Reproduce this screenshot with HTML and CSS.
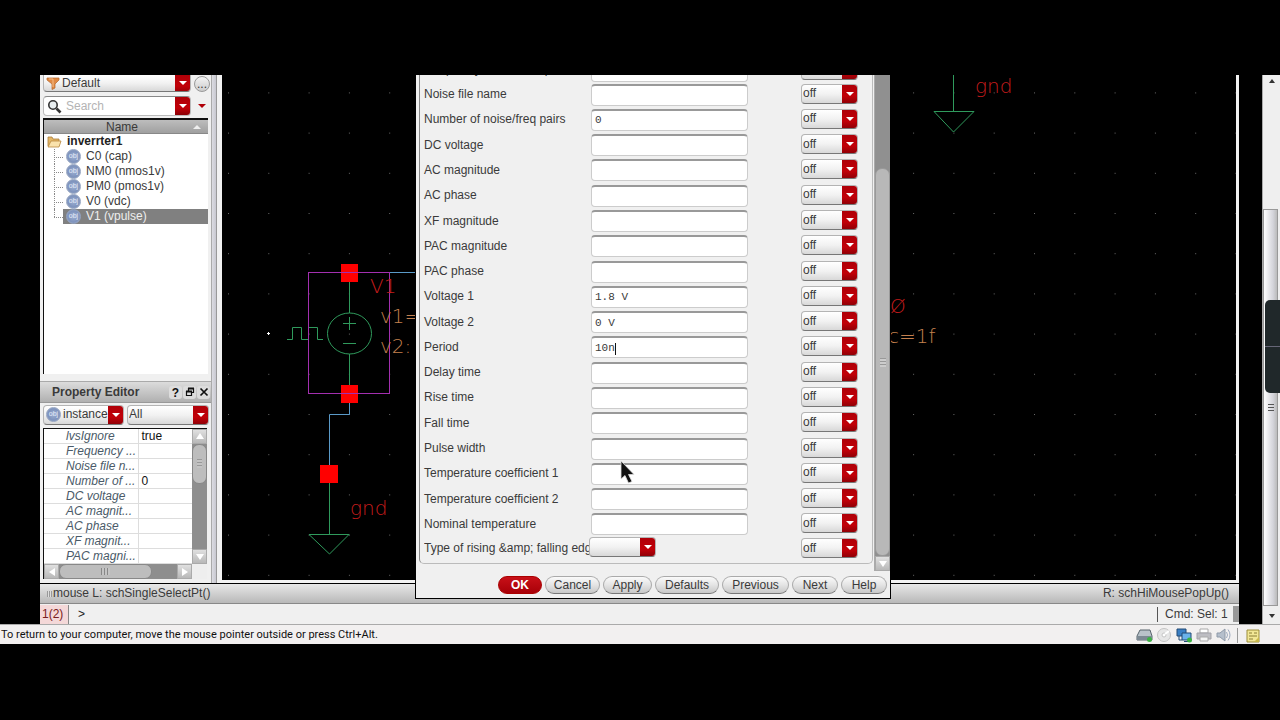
FILE: index.html
```html
<!DOCTYPE html>
<html lang="en">
<head>
<meta charset="utf-8">
<title>Schematic Editor - Edit Object Properties</title>
<link rel="stylesheet" href="styles.css">
</head>
<body>
<div class="stage">
  <div class="desk">
    <div class="app">
      <div class="workspace">
        <aside class="side">
          <section class="navigator">
            <div class="filter-row">
              <span class="combo filter">
                <svg class="funnel" width="14" height="13" viewBox="0 0 14 13"><path d="M1 1h12v2L9 7v4l-3 1.500V7L1 3z" fill="#e08a45" stroke="#b4652a" stroke-width=".7"/><path d="M3 2h4v8" fill="none" stroke="#f5bd88"/></svg>
                <select aria-label="Filter"><option>Default</option></select>
              </span>
              <button class="more" type="button">...</button>
            </div>
            <div class="search-row">
              <span class="search">
                <svg width="15" height="15" viewBox="0 0 15 15"><circle cx="6" cy="6" r="4.200" fill="#e8eef0" stroke="#333" stroke-width="1.600"/><path d="M9.500 9.500L13.500 13.500" stroke="#333" stroke-width="2.600"/></svg>
                <input type="text" placeholder="Search" aria-label="Search">
                <button class="drop" type="button" aria-label="Search options"></button>
              </span>
              <button class="tiny" type="button" aria-label="More"></button>
            </div>
            <div class="tree">
              <div class="tree-head">Name<i class="sort"></i></div>
              <div class="root">
                <svg width="15" height="13" viewBox="0 0 15 13"><path d="M1 11V2h4l1 2h6v7z" fill="#e5b766" stroke="#a87b3a" stroke-width=".8"/><path d="M1 12L4 6h10l-2 6z" fill="#fae2ac" stroke="#b98940" stroke-width=".8"/></svg>
                <b>inverrter1</b>
              </div>
              <ul class="nodes">
                <li><span class="node"><i class="obj">obj</i>C0 (cap)</span></li>
                <li><span class="node"><i class="obj">obj</i>NM0 (nmos1v)</span></li>
                <li><span class="node"><i class="obj">obj</i>PM0 (pmos1v)</span></li>
                <li><span class="node"><i class="obj">obj</i>V0 (vdc)</span></li>
                <li><span class="node selected"><i class="obj">obj</i>V1 (vpulse)</span></li>
              </ul>
            </div>
          </section>
          <section class="props">
            <header class="props-head"><b>Property Editor</b>
              <button type="button">?</button>
              <button type="button" aria-label="Float"><svg width="10" height="10" viewBox="0 0 10 10"><path d="M3.500 5V1.500h5v4H7M1.500 4.500h5v4h-5z" fill="none" stroke="#111" stroke-width="1.200"/><path d="M3 1.500h6M1 4.500h6" stroke="#111" stroke-width="2"/></svg></button>
              <button type="button" aria-label="Close"><svg width="10" height="10" viewBox="0 0 10 10"><path d="M1.500 1.500l7 7M8.500 1.500l-7 7" stroke="#111" stroke-width="1.700"/></svg></button>
            </header>
            <div class="props-pick">
              <span class="combo instance"><i class="obj">obj</i><select aria-label="Object kind"><option>instance</option></select></span>
              <span class="combo all"><select aria-label="Scope"><option>All</option></select></span>
            </div>
            <div class="props-body">
              <table class="props-table">
                <tr><th>lvsIgnore</th><td>true</td></tr>
                <tr><th>Frequency ...</th><td></td></tr>
                <tr><th>Noise file n...</th><td></td></tr>
                <tr><th>Number of ...</th><td>0</td></tr>
                <tr><th>DC voltage</th><td></td></tr>
                <tr><th>AC magnit...</th><td></td></tr>
                <tr><th>AC phase</th><td></td></tr>
                <tr><th>XF magnit...</th><td></td></tr>
                <tr><th>PAC magni...</th><td></td></tr>
              </table>
              <div class="vbar"><i class="step up"></i><i class="thumb"></i><i class="step down"></i></div>
              <div class="hbar"><i class="step left"></i><i class="thumb"></i><i class="step right"></i></div>
            </div>
          </section>
        </aside>
        <main class="canvas">
          <svg class="schematic" width="100%" height="100%">
            <defs>
              <pattern id="dots" x="228" y="12" width="40.300" height="40.200" patternUnits="userSpaceOnUse"><rect width="1" height="1" fill="#6a6a6a"/></pattern>
            </defs>
            <g transform="translate(-222 -75)">
              <rect x="222" y="75" width="3000" height="2000" fill="url(#dots)"/>
              <path d="M267 333.500h3M268.500 332v3" stroke="#fff"/>
              <g fill="none" stroke="#2f9a5c">
                <path d="M349.500 281V313M349.500 354V386M343 323.500h13M349.500 317v13M343 343.500h13"/>
                <ellipse cx="349.500" cy="333.500" rx="22" ry="20.500"/>
                <path d="M287 339.500h5.500v-12h9v12h7M308.500 327.500h9v12h5.500"/>
                <path d="M329.500 483V534.500M309 534.500h40L329.500 554z"/>
                <path d="M953.500 75V111.500M934 111.500h40L953.500 132z"/>
              </g>
              <path d="M389 272.500h27M349.500 402v12.500h-20V465" fill="none" stroke="#5a9ac8"/>
              <g fill="#f00"><rect x="341" y="264" width="17" height="18"/><rect x="341" y="385" width="17" height="18"/><rect x="320" y="465" width="18" height="18"/></g>
              <rect x="308.500" y="272.500" width="81" height="121" fill="none" stroke="#a32fb0"/>
              <g class="red">
                <text x="370" y="293">V1</text>
                <text x="350" y="515">gnd</text>
                <text x="975" y="93">gnd</text>
                <text x="890" y="313">Ø</text>
              </g>
              <g class="tan">
                <text x="380" y="323">v1=</text>
                <text x="380" y="353">v2:</text>
                <text x="888" y="343">c=1f</text>
              </g>
            </g>
          </svg>
        </main>
      </div>
      <div class="message"><span class="left"><i class="grip"></i>mouse L: schSingleSelectPt()</span><span class="right">R: schHiMousePopUp()</span></div>
      <div class="command"><span class="count">1(2)</span><span class="prompt">&gt;</span><span class="sel">Cmd: Sel: 1</span><i class="corner"></i></div>

      <form class="dialog">
        <div class="dialog-main">
          <div class="group">
            <div class="row cut"><label for="f0">Frequency name for 1/period</label><input id="f0" type="text"><span class="combo"><select aria-label="Display"><option>off</option></select></span></div>
            <div class="row"><label for="f1">Noise file name</label><input id="f1" type="text"><span class="combo"><select aria-label="Display"><option>off</option></select></span></div>
            <div class="row"><label for="f2">Number of noise/freq pairs</label><input id="f2" type="text" value="0"><span class="combo"><select aria-label="Display"><option>off</option></select></span></div>
            <div class="row"><label for="f3">DC voltage</label><input id="f3" type="text"><span class="combo"><select aria-label="Display"><option>off</option></select></span></div>
            <div class="row"><label for="f4">AC magnitude</label><input id="f4" type="text"><span class="combo"><select aria-label="Display"><option>off</option></select></span></div>
            <div class="row"><label for="f5">AC phase</label><input id="f5" type="text"><span class="combo"><select aria-label="Display"><option>off</option></select></span></div>
            <div class="row"><label for="f6">XF magnitude</label><input id="f6" type="text"><span class="combo"><select aria-label="Display"><option>off</option></select></span></div>
            <div class="row"><label for="f7">PAC magnitude</label><input id="f7" type="text"><span class="combo"><select aria-label="Display"><option>off</option></select></span></div>
            <div class="row"><label for="f8">PAC phase</label><input id="f8" type="text"><span class="combo"><select aria-label="Display"><option>off</option></select></span></div>
            <div class="row"><label for="f9">Voltage 1</label><input id="f9" type="text" value="1.8 V"><span class="combo"><select aria-label="Display"><option>off</option></select></span></div>
            <div class="row"><label for="f10">Voltage 2</label><input id="f10" type="text" value="0 V"><span class="combo"><select aria-label="Display"><option>off</option></select></span></div>
            <div class="row editing"><label for="f11">Period</label><input id="f11" type="text" value="10n"><span class="combo"><select aria-label="Display"><option>off</option></select></span></div>
            <div class="row"><label for="f12">Delay time</label><input id="f12" type="text"><span class="combo"><select aria-label="Display"><option>off</option></select></span></div>
            <div class="row"><label for="f13">Rise time</label><input id="f13" type="text"><span class="combo"><select aria-label="Display"><option>off</option></select></span></div>
            <div class="row"><label for="f14">Fall time</label><input id="f14" type="text"><span class="combo"><select aria-label="Display"><option>off</option></select></span></div>
            <div class="row"><label for="f15">Pulse width</label><input id="f15" type="text"><span class="combo"><select aria-label="Display"><option>off</option></select></span></div>
            <div class="row"><label for="f16">Temperature coefficient 1</label><input id="f16" type="text"><span class="combo"><select aria-label="Display"><option>off</option></select></span></div>
            <div class="row"><label for="f17">Temperature coefficient 2</label><input id="f17" type="text"><span class="combo"><select aria-label="Display"><option>off</option></select></span></div>
            <div class="row"><label for="f18">Nominal temperature</label><input id="f18" type="text"><span class="combo"><select aria-label="Display"><option>off</option></select></span></div>
            <div class="row edges"><label for="f19">Type of rising &amp;amp; falling edges</label><span class="combo wide"><select id="f19"><option></option></select></span><span class="combo"><select aria-label="Display"><option>off</option></select></span></div>
          </div>
          <div class="dialog-bar"><i class="thumb"></i><i class="step down"></i></div>
        </div>
        <footer class="actions">
          <button class="ok" type="button">OK</button>
          <button class="b-cancel" type="button">Cancel</button>
          <button class="b-apply" type="button">Apply</button>
          <button class="b-defaults" type="button">Defaults</button>
          <button class="b-previous" type="button">Previous</button>
          <button class="b-next" type="button">Next</button>
          <button class="b-help" type="button">Help</button>
        </footer>
        <svg class="pointer" width="16" height="26" viewBox="0 0 16 26"><path d="M1 1V19L5 15.500L8.500 23L12 21.500L8.500 14.500H14z" fill="#111" stroke="#ddd" stroke-width=".8"/></svg>
      </form>
    </div>
    <div class="hostbar">
      <i class="arrow up"></i>
      <div class="track"><i class="thumb"></i></div>
      <i class="arrow down"></i>
      <div class="handle"></div>
    </div>
  </div>
  <div class="status">
    <span>To return to your computer, move the mouse pointer outside or press Ctrl+Alt.</span>
    <svg width="130" height="17" viewBox="0 0 130 17">
      <path d="M4 3h10l2 6v4H1V9z" fill="#b9c2c9" stroke="#58646d"/><path d="M1 9h15v4H1z" fill="#7c8993"/><circle cx="13.500" cy="12.500" r="2.500" fill="#3bb143"/>
      <circle cx="28" cy="8" r="6.500" fill="#e6e6e6" stroke="#c4c4c4"/><circle cx="28" cy="8" r="2" fill="#fff" stroke="#c4c4c4"/><path d="M29 7l4-3" stroke="#fff" stroke-width="2"/>
      <path d="M41 2h9v7h-9z" fill="#3a7fc4" stroke="#234a74"/><path d="M46 6h9v7h-9z" fill="#6bb2ea" stroke="#234a74"/><path d="M43 9v4h3M48 14.500h6" stroke="#234a74" fill="none"/><circle cx="53.500" cy="13" r="2.500" fill="#3bb143"/>
      <path d="M64 2h8v4h-8z" fill="#fff" stroke="#aaa"/><path d="M61 6h14v6H61z" fill="#bdbdc2" stroke="#a2a2a8"/><path d="M64 10h8v4h-8z" fill="#f5f5f5" stroke="#aaa"/>
      <path d="M81 6h3l5-4v12l-5-4h-3z" fill="#b5bfcc" stroke="#8e99a8"/><path d="M90.500 5q2 3 0 6M92 2.500q4 5.500 0 11" fill="none" stroke="#9eabc0"/>
      <path d="M101.500 1v15" stroke="#999"/>
      <path d="M111 3h12v12h-12z" fill="#f2e795" stroke="#9b8d3a"/><path d="M113 6h3M118 6h3M113 9h8M113 12h4" stroke="#8b7e36"/><path d="M118 15l5-5v5z" fill="#c9b94c"/>
    </svg>
  </div>
</div>
</body>
</html>
```
FILE: styles.css
```css
* { box-sizing: border-box; }
body { margin: 0; background: #000; color: #3a3a3a; font: 12px/15px "Liberation Sans", Arial, sans-serif; }
button, input, select { font: inherit; color: inherit; margin: 0; padding: 0; border: 0; outline: 0; appearance: none; }
i { font-style: normal; }
.stage { min-height: 100vh; padding: 75px 0 76px; display: flex; flex-direction: column; }
.desk { flex: 1; display: flex; gap: 23px; padding-left: 40px; }
.app { flex: 1; min-width: 0; position: relative; display: flex; flex-direction: column; }
.workspace { flex: 1; display: flex; border-bottom: 1px solid #000; }

/* shared controls */
.combo { position: relative; display: flex; align-items: center; height: 20px; border: 1px solid #b4b4b4; border-bottom-color: #777; border-radius: 4px; background: linear-gradient(#fff, #f2f2f2 50%, #d8d8d8); overflow: hidden; }
.combo select { flex: 1; min-width: 0; height: 100%; padding-left: 1px; background: none; }
.combo::after { content: ""; position: absolute; top: -1px; right: -1px; width: 16px; height: 20px; background: linear-gradient(#ad0008, #c20008 60%, #8a0006); pointer-events: none; }
.combo::before { content: ""; position: absolute; z-index: 1; right: 3px; top: 7px; border: 4px solid transparent; border-top-color: #fff; border-bottom: 0; pointer-events: none; }
.obj { flex: none; width: 15px; height: 15px; border: 1px solid #93a3c0; border-radius: 50%; background: radial-gradient(#9eb0d2, #7e93bd 60%, #a9b7cf); color: #e4ebf8; font-size: 7px; line-height: 12px; text-align: center; }
.step { position: relative; flex: none; width: 15px; height: 15px; background: linear-gradient(#e0e0e0, #b8b8b8); border: 1px solid #aaa; display: grid; place-items: center; }
.step::after { content: ""; border: 4px solid transparent; }
.step.up::after { border-top: 0; border-bottom: 6px solid #fff; }
.step.down::after { border-bottom: 0; border-top: 6px solid #fff; }
.step.left::after { border-left: 0; border-right: 6px solid #fff; }
.step.right::after { border-right: 0; border-left: 6px solid #fff; }

/* left side */
.side { width: 182px; margin-right: -5px; background: linear-gradient(90deg, #f0f0f0 171px, #aaa 171px, #aaa 172px, #dcdce2 172px, #c8c8d0 176px, #999 176px); padding-right: 11px; display: flex; flex-direction: column; }
.navigator { flex: 1; display: flex; flex-direction: column; padding-left: 3px; border-bottom: 1px solid #aaa; }
.filter-row, .search-row { display: flex; align-items: center; gap: 3px; height: 20px; }
.filter-row { height: 17px; }
.search-row { margin-top: 4px; }
.filter { flex: none; width: 148px; height: 17px; padding-left: 2px; gap: 1px; border-top: 0; border-radius: 0 0 4px 4px; }
.filter::before { top: 6px; }
.more { flex: none; width: 16px; height: 16px; border: 1px solid #999; border-radius: 50%; background: linear-gradient(#f4f4f4, #ccc); line-height: 8px; }
.search { flex: none; width: 148px; height: 20px; display: flex; align-items: center; gap: 4px; padding-left: 3px; background: #fff; border: 1px solid #bbb; border-top-color: #888; border-radius: 4px; overflow: hidden; }
.search input { flex: 1; min-width: 0; background: none; }
.search input::placeholder { color: #b4b4b4; opacity: 1; }
.drop { align-self: stretch; width: 15px; background: linear-gradient(#ad0008, #c20008 60%, #8a0006); display: grid; place-items: center; }
.drop::after { content: ""; border: 4px solid transparent; border-top-color: #fff; border-bottom: 0; }
.tiny { width: 15px; height: 15px; background: none; display: grid; place-items: center; }
.tiny::after { content: ""; border: 4px solid transparent; border-top-color: #b00008; border-bottom: 0; }
.tree { flex: 1; margin: 2px 3px 7px 0; background: #fff; border: solid #111; border-width: 2px 0 0 1px; }
.tree-head { position: relative; height: 14px; line-height: 14px; padding-right: 8px; text-align: center; background: linear-gradient(#bdbdbd, #a0a0a0); border-bottom: 1px solid #888; }
.sort { position: absolute; right: 7px; top: 5px; border: 4px solid transparent; border-top: 0; border-bottom-color: #eee; }
.root { display: flex; align-items: center; gap: 5px; height: 15px; padding-left: 3px; color: #222; }
.nodes { list-style: none; margin: 0; padding: 0 0 0 10px; }
.nodes li { position: relative; padding-left: 9px; }
.nodes li::before { content: ""; position: absolute; left: 0; top: 0; width: 9px; height: 8px; border-bottom: 1px dotted #888; }
.nodes li::after { content: ""; position: absolute; left: 0; top: 0; height: 15px; border-left: 1px dotted #888; }
.nodes li:last-child::after { height: 8px; }
.node { display: flex; align-items: center; gap: 5px; height: 15px; padding-left: 3px; }
.selected { background: #808080; color: #eee; }
.props { display: flex; flex-direction: column; padding-bottom: 4px; }
.props-head { display: flex; align-items: center; gap: 1px; height: 21px; padding: 1px 1px 0 12px; background: linear-gradient(#dcdcdc, #b0b0b0); border-bottom: 1px solid #999; }
.props-head b { flex: 1; }
.props-head button { width: 13px; height: 13px; border-radius: 3px; background: #ddd; color: #111; font-weight: bold; display: grid; place-items: center; }
.props-pick { display: flex; gap: 3px; padding: 2px 2px 3px 3px; }
.instance { width: 81px; padding-left: 2px; gap: 1px; }
.all { flex: 1; }
.props-body { margin: 0 4px 0 3px; display: grid; grid-template-columns: 1fr 15px; border: solid #111; border-width: 1px 0 0 1px; background: #eee; }
.props-table { border-collapse: collapse; table-layout: fixed; width: 100%; background: #fff; }
.props-table th, .props-table td { height: 15px; padding: 0; line-height: 14px; font-weight: normal; text-align: left; border-bottom: 1px solid #ddd; white-space: nowrap; }
.props-table th { width: 94px; padding-left: 22px; font-style: italic; color: #4a5a68; border-right: 1px solid #ddd; }
.props-table td { padding-left: 3px; color: #111; }
.vbar { display: flex; flex-direction: column; background: #8e8e8e; }
.vbar .thumb { height: 40px; border-radius: 7px; border: 1px solid #888; background: repeating-linear-gradient(#999 0 1px, #c4c4c4 1px 3px) center/5px 9px no-repeat #bdbdbd; }
.vbar .down { margin-top: auto; }
.hbar { display: flex; background: #8e8e8e; }
.hbar .thumb { width: 93px; border-radius: 7px; border: 1px solid #888; background: repeating-linear-gradient(90deg, #888 0 1px, #c4c4c4 1px 3px) center/9px 7px no-repeat #bdbdbd; }
.hbar .right { margin-left: auto; }

/* drawing area */
.canvas { flex: 1; min-width: 0; position: relative; background: #000; border: solid #f2f2f2; border-width: 0 3px 3px 5px; overflow: hidden; }
.schematic { position: absolute; inset: 0; }
.schematic text { font: 200 20px "DejaVu Sans", sans-serif; }
.red { fill: #c41c1c; }
.tan { fill: #c4804e; }

/* bottom bars */
.message { height: 20px; display: flex; justify-content: space-between; align-items: center; padding: 0 10px 0 7px; background: linear-gradient(#e8e8e8, #b8b8b8); border-bottom: 1px solid #888; }
.message .left { display: flex; align-items: center; gap: 1px; }
.grip { width: 5px; height: 6px; background: repeating-linear-gradient(90deg, #999 0 1px, #ddd 1px 2px); }
.command { height: 20px; display: flex; align-items: center; background: #f0f0f0; }
.count { width: 29px; padding-left: 2px; line-height: 19px; color: #7a2020; background: #f4d8d8; border-right: 1px solid #888; }
.prompt { flex: 1; padding-left: 9px; color: #222; }
.sel { width: 76px; padding-left: 7px; border-left: 1px solid #555; }
.corner { width: 6px; height: 16px; background: #999; }

/* floating properties form */
.dialog { position: absolute; left: 375px; top: 0; bottom: 25px; width: 476px; display: flex; flex-direction: column; background: #f0f0f0; border: solid #000; border-width: 0 1px 1px; }
.dialog-main { flex: 1; display: flex; gap: 1px; padding-left: 3px; }
.group { flex: 1; display: grid; grid-template-rows: 7px repeat(18, 1fr) 26px; border: 1px solid #bbb; border-top: 0; border-left-color: #888; border-radius: 0 0 5px 5px; }
.row { position: relative; display: grid; grid-template-columns: 167px 210px 57px; align-items: center; padding-left: 4px; min-height: 0; white-space: nowrap; }
.row > .combo:last-child { grid-column: 3; margin-bottom: 2px; }
.row input { width: 157px; height: 22px; padding-left: 3px; background: #fff; border: 1px solid #ccc; border-top: 2px solid #999; border-radius: 4px; font: 11px/18px "Liberation Mono", monospace; }
.row select { padding-left: 1px; }
.cut { grid-template-rows: 7px; align-items: end; overflow: hidden; }
.cut label { margin-bottom: 5px; }
.editing::after { content: ""; position: absolute; left: 195px; top: 8px; width: 1px; height: 12px; background: #111; }
.edges label { overflow: hidden; margin-bottom: 3px; }
.edges .wide { width: 67px; margin-left: -2px; margin-bottom: 6px; }
.edges > .combo:last-child { margin-bottom: 4px; }
.dialog-bar { width: 16px; display: flex; flex-direction: column; margin-bottom: -7px; padding-top: 93px; background: #909090; border-left: 1px solid #aaa; }
.dialog-bar .thumb { flex: 1; border: 1px solid #999; border-radius: 7px; background: repeating-linear-gradient(#999 0 1px, #ccc 1px 3px) center/6px 9px no-repeat #b8b8b8; }
.actions { height: 34px; display: flex; align-items: flex-start; justify-content: flex-end; gap: 3px; padding: 12px 3px 0 0; }
.actions button { height: 18px; border: 1px solid #aaa; border-bottom-color: #777; border-radius: 9px; background: linear-gradient(#fafafa, #e4e4e4 50%, #c8c8c8); }
.actions .ok { width: 44px; color: #fff; font-weight: bold; border-color: #a00; background: linear-gradient(#c81018, #a80008); }
.b-cancel { width: 55px; }
.b-apply { width: 49px; }
.b-defaults { width: 64px; }
.b-previous { width: 67px; }
.b-next { width: 46px; }
.b-help { width: 46px; }
.pointer { position: absolute; left: 204px; top: 385px; }

/* viewer window */
.hostbar { position: relative; width: 18px; display: flex; flex-direction: column; align-items: center; background: #efefef; border-left: 1px solid #aaa; }
.arrow { border: 3px solid transparent; }
.arrow.up { border-top: 0; border-bottom: 4px solid #333; margin: 4px 0; }
.arrow.down { border-bottom: 0; border-top: 4px solid #333; margin: 8px 0 6px; }
.track { flex: 1; width: 100%; padding: 122px 2px 0 0; display: flex; }
.track .thumb { flex: 1; border: 1px solid #999; background: repeating-linear-gradient(#555 0 1px, transparent 1px 3px) center/6px 8px no-repeat, linear-gradient(90deg, #fff, #d4d4da 70%, #bbb); }
.handle { position: absolute; left: 2px; right: 0; top: 225px; height: 93px; border-radius: 5px 0 0 5px; background: linear-gradient(#20282a 46px, #667 46px, #667 47px, #20282a 47px); }
.status { height: 20px; display: flex; align-items: center; justify-content: space-between; padding: 0 14px 0 1px; background: #f2f0f0; border-top: 1px solid #aaa; color: #111; font: 11px/18px Roboto, sans-serif; }
.status svg { margin-top: 2px; }
```
